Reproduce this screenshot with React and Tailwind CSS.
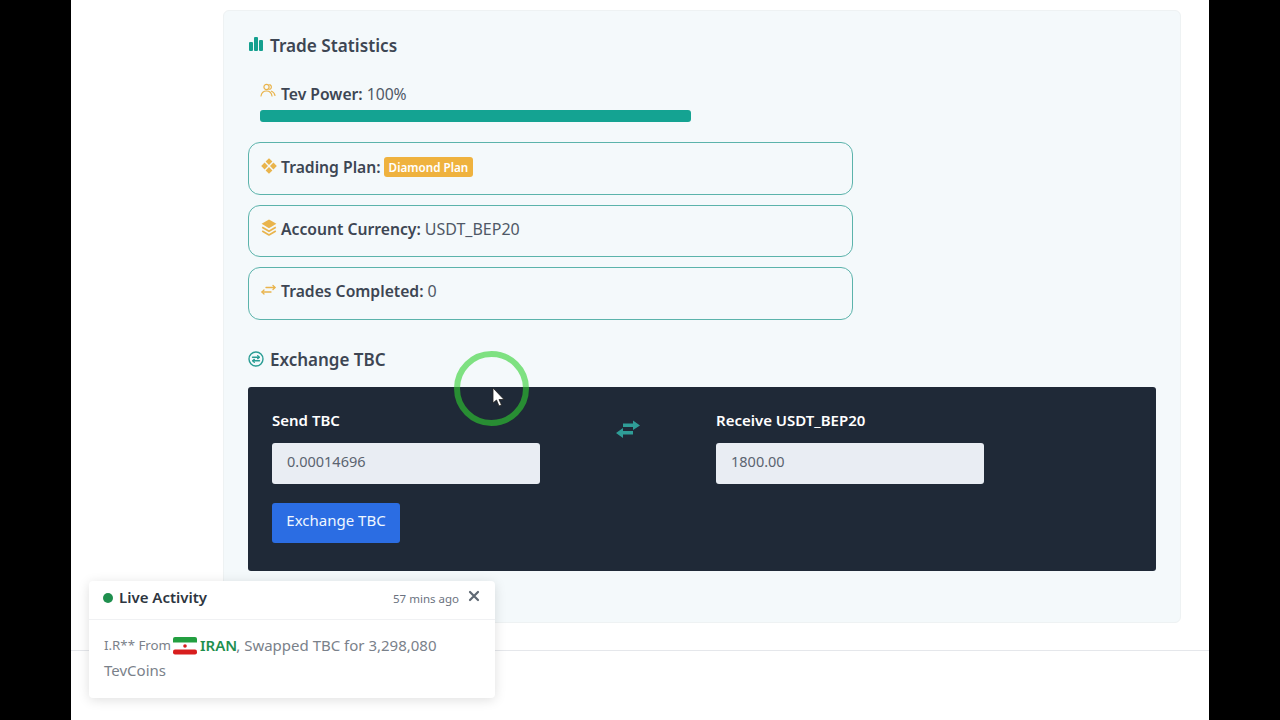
import React from "react";

function BarsIcon() {
  return (
    <svg width="16" height="16" viewBox="0 0 16 16" fill="#14a08f" className="shrink-0">
      <rect x="1" y="6" width="4" height="9" rx="1" />
      <rect x="6" y="1" width="4" height="14" rx="1" />
      <rect x="11" y="4" width="4" height="11" rx="1" />
    </svg>
  );
}

function UsersIcon() {
  return (
    <svg width="16" height="16" viewBox="0 0 16 16" fill="none" stroke="#e9b44c" strokeWidth="1.2" strokeLinecap="round" className="shrink-0">
      <circle cx="6.5" cy="4" r="2.6" />
      <path d="M9.8 1.6a2.6 2.6 0 0 1 0 4.8" />
      <path d="M1 13c.6-3.4 2.6-5 5.5-5s4.9 1.6 5.5 5" />
      <path d="M11.5 8.2c1.9.6 3 2.2 3.5 4.3" />
    </svg>
  );
}

function DiamondsIcon() {
  return (
    <svg width="16" height="16" viewBox="0 0 16 16" fill="#e9b44c" className="shrink-0">
      <path d="M8 .2 11.4 3.6 8 7 4.600 3.600Z" />
      <path d="M3.600 4.600 7 8 3.600 11.400 .2 8Z" />
      <path d="M12.400 4.600 15.800 8 12.400 11.400 9 8Z" />
      <path d="M8 9 11.400 12.400 8 15.800 4.600 12.400Z" />
    </svg>
  );
}

function LayersIcon() {
  return (
    <svg width="16" height="18" viewBox="0 0 16 18" fill="none" className="shrink-0">
      <path d="M8 .4 15.400 4.800 8 9.200 .6 4.800Z" fill="#e9b44c" />
      <path d="M1.200 8.300 8 12.300 14.800 8.300" stroke="#e9b44c" strokeWidth="1.700" strokeLinejoin="round" />
      <path d="M1.200 12 8 16 14.800 12" stroke="#e9b44c" strokeWidth="1.700" strokeLinejoin="round" />
    </svg>
  );
}

function SwapSmall() {
  return (
    <svg width="15" height="12" viewBox="0 0 15 12" fill="none" stroke="#e9b44c" strokeWidth="1.300" strokeLinecap="round" strokeLinejoin="round" className="shrink-0">
      <path d="M5 3.500H14" />
      <path d="M12 1.500 14 3.500 12 5.500" />
      <path d="M10 8H1" />
      <path d="M3 6 1 8 3 10" />
    </svg>
  );
}

function ExchangeCircle() {
  return (
    <svg width="16" height="16" viewBox="0 0 16 16" fill="none" stroke="#2a9d94" strokeWidth="1.400" strokeLinecap="round" strokeLinejoin="round" className="shrink-0">
      <circle cx="8" cy="8" r="7" />
      <path d="M4.500 6.300H11" />
      <path d="M9.700 4.800 11.300 6.300 9.700 7.600" />
      <path d="M11.500 9.700H5" />
      <path d="M6.300 8.400 4.700 9.700 6.300 11.200" />
    </svg>
  );
}

function SwapBig() {
  return (
    <svg width="26" height="20" viewBox="0 0 26 20" fill="#2f9d97">
      <path d="M8 4.500H18V1.500L25 6.500 18 11V8H8Z" />
      <path d="M18 12H8V9L1 14 8 19V15.500H18Z" />
    </svg>
  );
}

function Cursor() {
  return (
    <svg width="14" height="20" viewBox="0 0 14 20" className="absolute left-[491px] top-[387px]">
      <path d="M2 1V16L5.500 13 8 19 10.500 18 8 12.500H13Z" fill="#fff" stroke="#222" strokeWidth="0.8" />
    </svg>
  );
}

function IranFlag() {
  return (
    <svg width="24" height="18" viewBox="0 0 24 18" className="shrink-0">
      <rect width="24" height="7" y="0" rx="2" fill="#239f40" />
      <rect width="24" height="5" y="5" fill="#239f40" />
      <rect width="24" height="7" y="5.500" fill="#fff" />
      <rect width="24" height="5" y="12.500" rx="2" fill="#d81e1e" />
      <circle cx="12" cy="9" r="1.800" fill="#d81e1e" />
    </svg>
  );
}

function StatBox({ icon, label, value, h, pt, children }) {
  return (
    <div className={`w-[605px] ${h} ${pt} rounded-xl border border-[#5bb3ab] px-[13px]`}>
      <div className="flex items-center gap-[4px] text-[15.7px] leading-[20px] text-[#3d4653]">
        <span className="w-[15px] -ml-[1px] mr-[1px] flex justify-center -mt-[3px]">{icon}</span>
        <span className="font-semibold">{label}</span>
        {value && <span className="text-[#4f5866] text-[16px]">{value}</span>}
        {children}
      </div>
    </div>
  );
}

export default function App() {
  return (
    <div className="relative flex w-[1280px] h-[720px] overflow-hidden bg-black font-['Noto_Sans',sans-serif]">
      <div className="w-[71px] shrink-0 bg-black" />
      <main className="w-[1138px] shrink-0 h-full bg-white flex flex-col">
        <section className="ml-[152px] mt-[10px] w-[958px] h-[613px] shrink-0 rounded-md border border-[#eef2f3] bg-[#f4f9fb] pl-[24px] pr-[24px] pt-[23px]">
          <h2 className="flex items-center gap-[6px] h-[24px] text-[17.2px] font-semibold text-[#3d4653] leading-[24px]">
            <span className="-mt-[5px]"><BarsIcon /></span>
            Trade Statistics
          </h2>

          <div className="ml-[12px] mt-[26px] w-[431px]">
            <div className="flex items-center gap-[4px] h-[20px] text-[15.7px] leading-[20px] text-[#3d4653]">
              <span className="-mt-[7px] mr-[1px]"><UsersIcon /></span>
              <span className="font-semibold">Tev Power:</span>
              <span className="text-[#4f5866]">100%</span>
            </div>
            <div className="mt-[6px] h-[12px] rounded-[3px] bg-[#14a392]" />
          </div>

          <div className="mt-[20px] flex flex-col gap-[10px]">
            <StatBox icon={<DiamondsIcon />} label="Trading Plan:" h="h-[53px]" pt="pt-[14px]">
              <span className="rounded-[3px] bg-[#efb23e] px-[5px] h-[20px] flex items-center text-[11.7px] font-semibold text-white -ml-[1px]">Diamond Plan</span>
            </StatBox>
            <StatBox icon={<LayersIcon />} label="Account Currency:" value="USDT_BEP20" h="h-[52px]" pt="pt-[13px]" />
            <StatBox icon={<SwapSmall />} label="Trades Completed:" value="0" h="h-[53px]" pt="pt-[13px]" />
          </div>

          <h2 className="mt-[28px] flex items-center gap-[6px] h-[24px] text-[17px] font-semibold text-[#3d4653] leading-[24px]">
            <span className="-mt-[3px]"><ExchangeCircle /></span>
            Exchange TBC
          </h2>

          <div className="mt-[15px] w-[908px] h-[184px] rounded-[3px] bg-[#1f2937] pl-[24px] pt-[23px]">
            <div className="flex">
              <div className="w-[268px]">
                <div className="h-[20px] text-[15px] leading-[20px] font-semibold text-white">Send TBC</div>
                <div className="mt-[13px] h-[41px] rounded-[3px] bg-[#e9edf3] pl-[15px] pb-[3px] flex items-center text-[14.5px] text-[#5b6470]">0.00014696</div>
              </div>
              <div className="w-[176px] flex justify-center pt-[9px]">
                <div className="h-[20px]"><SwapBig /></div>
              </div>
              <div className="w-[268px]">
                <div className="h-[20px] text-[15px] leading-[20px] font-semibold text-white">Receive USDT_BEP20</div>
                <div className="mt-[13px] h-[41px] rounded-[3px] bg-[#e9edf3] pl-[15px] pb-[3px] flex items-center text-[14.5px] text-[#5b6470]">1800.00</div>
              </div>
            </div>
            <button className="mt-[19px] h-[40px] w-[128px] rounded-[3px] bg-[#2b6de3] text-[15px] leading-[34px] pb-[6px] text-[#eef6ff]">Exchange TBC</button>
          </div>
        </section>
        <div className="mt-[27px] border-t border-[#e5e7eb]" />
      </main>
      <div className="w-[71px] shrink-0 bg-black" />

      <div className="absolute left-[454px] top-[351px] w-[75px] h-[75px] rounded-full border-[6px] border-[#2fd030]/60" />
      <Cursor />

      <aside className="absolute left-[89px] top-[581px] w-[406px] h-[117px] rounded-[4px] bg-white shadow-[0_2px_12px_rgba(0,0,0,0.13)]">
        <header className="flex items-center h-[39px] pl-[14px] pr-[16px] pb-[5px] border-b border-[#f0f1f3]">
          <span className="w-[10px] h-[10px] rounded-full bg-[#1f8f4e]" />
          <span className="ml-[6px] text-[15px] font-semibold text-[#2d3540]">Live Activity</span>
          <span className="ml-auto text-[11.5px] text-[#6b7280] mt-[2px]">57 mins ago</span>
          <svg width="12" height="12" viewBox="0 0 12 12" className="ml-[9px] -mr-[1px] -mt-[3px]" stroke="#5f6873" strokeWidth="2.2" strokeLinecap="round">
            <path d="M2 2 10 10M10 2 2 10" />
          </svg>
        </header>
        <div className="pl-[15px] pt-[13px] text-[15px] leading-[25px] text-[#7a818a]">
          <div className="flex items-center">
            <span className="text-[13.3px]">I.R** From</span>
            <span className="ml-[2px] mr-[3px]"><IranFlag /></span>
            <span className="font-semibold text-[#1f8f4e]">IRAN</span>
            <span className="-ml-[1px]">, Swapped TBC for 3,298,080</span>
          </div>
          <div>TevCoins</div>
        </div>
      </aside>
    </div>
  );
}
